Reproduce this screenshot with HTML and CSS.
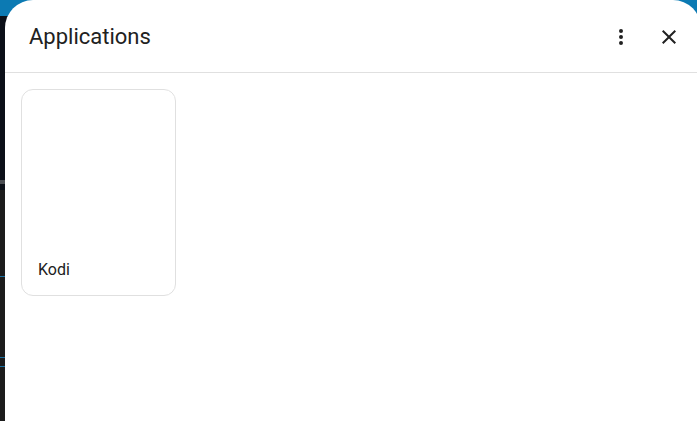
FILE: index.html
```html
<!DOCTYPE html>
<html>
<head>
<meta charset="utf-8">
<link rel="stylesheet" href="styles.css">
</head>
<body>
<div class="backdrop">
  <div class="bd-blue"></div>
  <div class="bd-navy"></div>
  <div class="bd-gray"></div>
  <div class="bd-navy2"></div>
  <div class="bd-dark">
    <div class="bd-line l1"></div>
    <div class="bd-line l2"></div>
    <div class="bd-line l3"></div>
  </div>
</div>
<div class="dialog">
  <header class="dialog-header">
    <h2 class="title">Applications</h2>
    <div class="actions">
      <button class="icon-btn" aria-label="More">
        <svg viewBox="0 0 24 24" width="24" height="24"><path d="M12,16A2,2 0 0,1 14,18A2,2 0 0,1 12,20A2,2 0 0,1 10,18A2,2 0 0,1 12,16M12,10A2,2 0 0,1 14,12A2,2 0 0,1 12,14A2,2 0 0,1 10,12A2,2 0 0,1 12,10M12,4A2,2 0 0,1 14,6A2,2 0 0,1 12,8A2,2 0 0,1 10,6A2,2 0 0,1 12,4Z"/></svg>
      </button>
      <button class="icon-btn" aria-label="Close">
        <svg viewBox="0 0 24 24" width="24" height="24"><path d="M19,6.41L17.59,5L12,10.59L6.41,5L5,6.41L10.59,12L5,17.59L6.41,19L12,13.41L17.59,19L19,17.59L13.41,12L19,6.41Z"/></svg>
      </button>
    </div>
  </header>
  <div class="dialog-content">
    <div class="app-card">
      <span class="app-name">Kodi</span>
    </div>
  </div>
</div>
</body>
</html>
```

FILE: styles.css
```css
html, body {
  margin: 0;
  padding: 0;
  height: 100%;
  overflow: hidden;
  background: #1c1c1c;
  font-family: Roboto, "Noto Sans", sans-serif;
}
.backdrop {
  display: flex;
  flex-direction: column;
  height: 100%;
  overflow: hidden;
}
.bd-blue { height: 16px; background: #0c7ab3; flex: none; }
.bd-navy { height: 164px; background: #0b0f18; flex: none; }
.bd-gray { height: 4px; background: #4a4d52; flex: none; }
.bd-navy2 { height: 6px; background: #0b0f18; flex: none; }
.bd-dark {
  flex: 1;
  background: #1c1c1c;
  display: flex;
  flex-direction: column;
  padding-top: 86px;
}
.bd-line { height: 1px; background: #1a6fa0; flex: none; }
.l2 { margin-top: 80px; }
.l3 { margin-top: 8px; }

.dialog {
  position: absolute;
  left: 5px;
  top: 0;
  right: -4px;
  bottom: 0;
  background: #ffffff;
  border-radius: 28px 28px 0 0;
  display: flex;
  flex-direction: column;
  overflow: hidden;
}
.dialog-header {
  display: flex;
  align-items: center;
  justify-content: space-between;
  height: 73px;
  box-sizing: border-box;
  border-bottom: 1px solid #e0e0e0;
  padding: 1px 8px 0 24px;
  flex: none;
}
.title {
  margin: 0;
  font-size: 22px;
  font-weight: 400;
  color: #212121;
  letter-spacing: 0;
}
.actions {
  display: flex;
  align-items: center;
}
.icon-btn {
  width: 48px;
  height: 48px;
  border: none;
  background: none;
  padding: 0;
  display: flex;
  align-items: center;
  justify-content: center;
  cursor: pointer;
}
.icon-btn svg { fill: #212121; display: block; }
.dialog-content {
  padding: 16px;
  display: flex;
  align-items: flex-start;
}
.app-card {
  width: 155px;
  height: 207px;
  box-sizing: border-box;
  border: 1px solid #e0e0e0;
  border-radius: 12px;
  display: flex;
  align-items: flex-end;
  padding: 0 16px 15px;
}
.app-name {
  font-size: 16px;
  color: #212121;
  line-height: 20px;
}
```
